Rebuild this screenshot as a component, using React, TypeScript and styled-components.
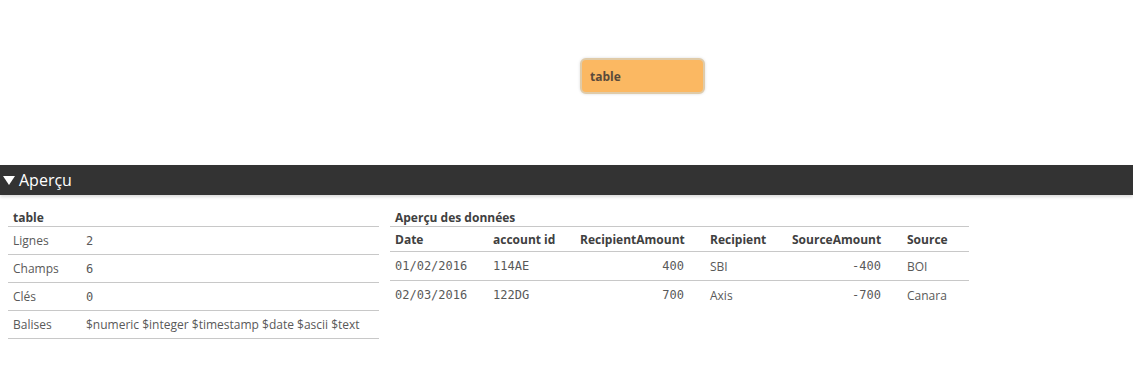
import React, { FC } from 'react';
import styled, { createGlobalStyle } from 'styled-components';

const GlobalStyle = createGlobalStyle`
  html, body {
    margin: 0;
    padding: 0;
    background: #ffffff;
    font-family: 'Open Sans', 'Noto Sans', Arial, sans-serif;
    color: #595959;
  }
`;

const Page = styled.div`
  width: 1133px;
  height: 392px;
  display: flex;
  flex-direction: column;
  overflow: hidden;
`;

const Canvas = styled.div`
  height: 165px;
  display: flex;
  justify-content: flex-start;
  padding: 58px 0 0 580px;
  box-sizing: border-box;
`;

const TableNode = styled.div`
  width: 125px;
  height: 36px;
  box-sizing: border-box;
  background: #fbb862;
  border: 2px solid #e0cba8;
  border-radius: 6px;
  box-shadow: 0 0 3px rgba(0, 0, 0, 0.15);
  display: flex;
  align-items: center;
  padding-left: 8px;
  font-size: 12px;
  font-weight: 700;
  color: #5a4a3a;
`;

const PanelBar = styled.div`
  height: 30px;
  background: #333333;
  display: flex;
  align-items: center;
  gap: 4px;
  padding-left: 3px;
  color: #ffffff;
  font-size: 16px;
  box-shadow: 0 2px 3px rgba(0, 0, 0, 0.15);
`;

const Caret = styled.span`
  width: 0;
  height: 0;
  border-left: 6px solid transparent;
  border-right: 6px solid transparent;
  border-top: 9px solid #ffffff;
  margin-top: 1px;
`;

const Body = styled.div`
  display: flex;
  align-items: flex-start;
  gap: 11px;
  padding: 15px 0 0 8px;
`;

const Section = styled.div<{ width: number }>`
  width: ${(p) => p.width}px;
  display: flex;
  flex-direction: column;
`;

const Title = styled.div`
  font-size: 12px;
  font-weight: 700;
  color: #404040;
  height: 16px;
  line-height: 16px;
  padding-left: 5px;
  border-bottom: 1px solid #c8c8c8;
`;

const InfoRow = styled.div`
  display: grid;
  grid-template-columns: 73px 1fr;
  height: 27px;
  align-items: center;
  padding-left: 5px;
  border-bottom: 1px solid #c8c8c8;
  font-size: 12px;
  color: #595959;
`;

const Mono = styled.span`
  font-family: 'DejaVu Sans Mono', 'Liberation Mono', monospace;
  font-size: 12px;
  color: #595959;
`;

const Grid = styled.div<{ header?: boolean; last?: boolean }>`
  display: grid;
  grid-template-columns: 98px 87px 104px 108px 89px 1fr;
  height: ${(p) => (p.header ? 24 : 28)}px;
  align-items: center;
  padding-left: 5px;
  border-bottom: ${(p) => (p.last ? 'none' : '1px solid #c8c8c8')};
  font-size: 12px;
  font-weight: ${(p) => (p.header ? 700 : 400)};
  color: ${(p) => (p.header ? '#404040' : '#595959')};
`;

const Cell = styled.span<{ right?: boolean; mono?: boolean; gap?: boolean }>`
  text-align: ${(p) => (p.right ? 'right' : 'left')};
  padding-left: ${(p) => (p.gap ? 26 : 0)}px;
  font-family: ${(p) =>
    p.mono ? "'DejaVu Sans Mono', 'Liberation Mono', monospace" : 'inherit'};
  white-space: nowrap;
`;

const info = [
  { label: 'Lignes', value: '2', mono: true },
  { label: 'Champs', value: '6', mono: true },
  { label: 'Clés', value: '0', mono: true },
  { label: 'Balises', value: '$numeric $integer $timestamp $date $ascii $text', mono: false },
];

const rows = [
  ['01/02/2016', '114AE', '400', 'SBI', '-400', 'BOI'],
  ['02/03/2016', '122DG', '700', 'Axis', '-700', 'Canara'],
];

const App: FC = () => (
  <Page>
    <GlobalStyle />
    <Canvas>
      <TableNode>table</TableNode>
    </Canvas>
    <PanelBar>
      <Caret />
      Aperçu
    </PanelBar>
    <Body>
      <Section width={371}>
        <Title>table</Title>
        {info.map((r) => (
          <InfoRow key={r.label}>
            <span>{r.label}</span>
            {r.mono ? <Mono>{r.value}</Mono> : <span>{r.value}</span>}
          </InfoRow>
        ))}
      </Section>
      <Section width={579}>
        <Title>Aperçu des données</Title>
        <Grid header>
          <Cell>Date</Cell>
          <Cell>account id</Cell>
          <Cell right>RecipientAmount</Cell>
          <Cell gap>Recipient</Cell>
          <Cell right>SourceAmount</Cell>
          <Cell gap>Source</Cell>
        </Grid>
        {rows.map((r, i) => (
          <Grid key={r[0]} last={i === rows.length - 1}>
            <Cell mono>{r[0]}</Cell>
            <Cell mono>{r[1]}</Cell>
            <Cell mono right>{r[2]}</Cell>
            <Cell gap>{r[3]}</Cell>
            <Cell mono right>{r[4]}</Cell>
            <Cell gap>{r[5]}</Cell>
          </Grid>
        ))}
      </Section>
    </Body>
  </Page>
);

export default App;
